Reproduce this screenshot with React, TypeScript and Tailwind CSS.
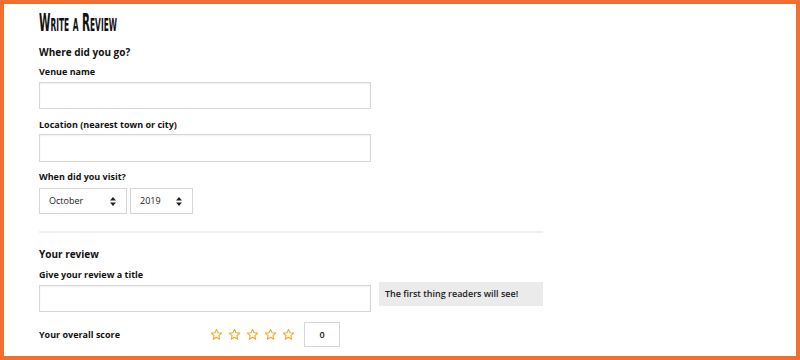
import React from "react";

const Star = () => (
  <svg width="13" height="13" viewBox="0 0 24 24" className="shrink-0">
    <polygon
      points="12,2.5 14.8,8.9 21.6,9.5 16.4,14 18,20.8 12,17.2 6,20.8 7.6,14 2.4,9.5 9.2,8.9"
      fill="none"
      stroke="#f5a623"
      strokeWidth="2"
      strokeLinejoin="round"
    />
  </svg>
);

const Arrows = () => (
  <svg width="6" height="9" viewBox="0 0 6 9" className="shrink-0">
    <polygon points="3,0 6,3.5 0,3.5" fill="#222" />
    <polygon points="0,5.5 6,5.5 3,9" fill="#222" />
  </svg>
);

const Label = ({ children, className = "" }: { children: React.ReactNode; className?: string }) => (
  <div className={`h-[12px] flex items-center text-[9px] font-bold text-[#111] ${className}`}>{children}</div>
);

const Input = ({ className = "" }: { className?: string }) => (
  <div className={`w-[332px] border border-[#d6d6d6] bg-white shadow-[inset_0_1px_2px_rgba(0,0,0,0.06)] ${className}`} />
);

export default function App() {
  return (
    <div
      className="w-[800px] h-[360px] border-4 border-[#f07030] bg-white pl-[35px] overflow-hidden"
      style={{ fontFamily: '"Open Sans", "Liberation Sans", sans-serif' }}
    >
      <div className="mt-[6px] h-[24px] flex items-center">
        <span
          className="font-bold text-[25px] leading-none text-[#111] origin-left scale-x-[0.46] inline-block"
          style={{ fontFamily: '"DejaVu Sans Condensed", "DejaVu Sans", sans-serif', fontVariant: "small-caps" }}
        >
          Write a Review
        </span>
      </div>
      <div className="mt-[12px] h-[12px] flex items-center text-[10px] font-bold text-[#111]">Where did you go?</div>
      <Label className="mt-[8px]">Venue name</Label>
      <Input className="mt-[4px] h-[27px]" />
      <Label className="mt-[10px]">Location (nearest town or city)</Label>
      <Input className="mt-[3px] h-[28px]" />
      <Label className="mt-[9px]">When did you visit?</Label>
      <div className="mt-[5px] flex gap-[3px]">
        <div className="w-[88px] h-[26px] border border-[#d6d6d6] flex items-center justify-between pl-[9px] pr-[10px] text-[9px] text-[#222]">
          <span>October</span>
          <Arrows />
        </div>
        <div className="w-[63px] h-[26px] border border-[#d6d6d6] flex items-center justify-between pl-[9px] pr-[10px] text-[9px] text-[#222]">
          <span>2019</span>
          <Arrows />
        </div>
      </div>
      <div className="mt-[17px] w-[504px] h-[2px] bg-[#f0f0f0]" />
      <div className="mt-[15px] h-[12px] flex items-center text-[10px] font-bold text-[#111]">Your review</div>
      <Label className="mt-[9px]">Give your review a title</Label>
      <div className="mt-[1px] flex items-start">
        <Input className="mt-[3px] h-[27px]" />
        <div className="ml-[8px] w-[164px] h-[24px] bg-[#ebebeb] flex items-center pl-[6px] text-[9px] font-semibold text-[#222]">
          The first thing readers will see!
        </div>
      </div>
      <div className="mt-[10px] flex items-center h-[25px]">
        <div className="w-[171px] text-[9px] font-bold text-[#111]">Your overall score</div>
        <div className="flex gap-[5px]">
          <Star />
          <Star />
          <Star />
          <Star />
          <Star />
        </div>
        <div className="ml-[9px] w-[36px] h-[25px] border border-[#d6d6d6] flex items-center justify-center text-[9px] font-semibold text-[#111]">
          0
        </div>
      </div>
    </div>
  );
}
